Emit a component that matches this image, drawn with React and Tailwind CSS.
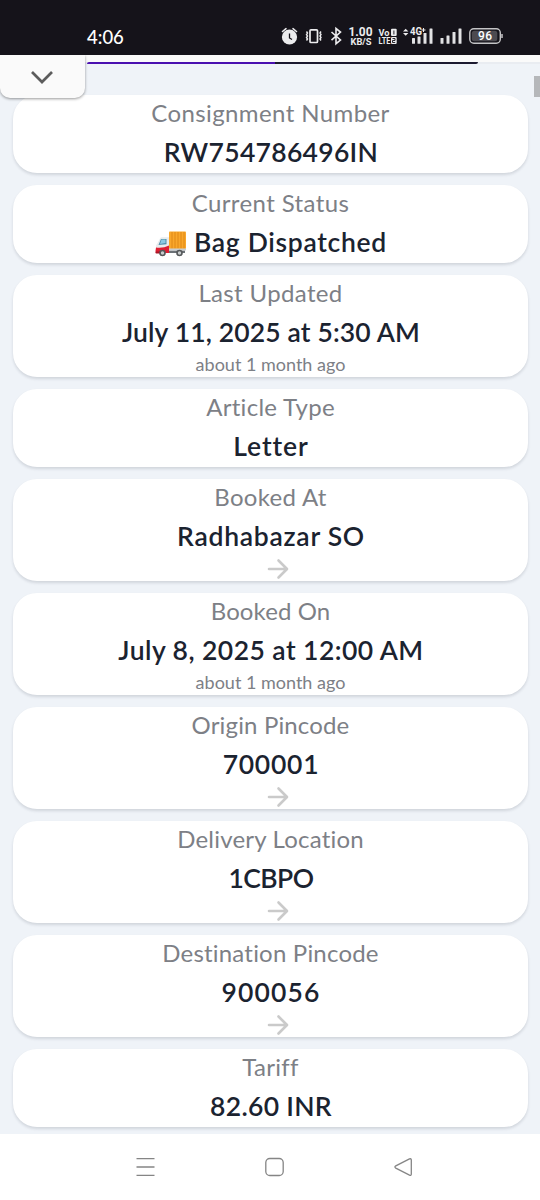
import React from "react";

const cards = [
  { label: "Consignment Number", labelClass: "tracking-[0.4px]", value: "RW754786496IN", valueClass: "tracking-[0.3px]" },
  { label: "Current Status", labelClass: "tracking-[0.4px]", value: "Bag Dispatched", valueClass: "tracking-[0.7px]", truck: true },
  { label: "Last Updated", labelClass: "tracking-[0.35px]", value: "July 11, 2025 at 5:30 AM", valueClass: "tracking-[0.15px]", ago: "about 1 month ago" },
  { label: "Article Type", labelClass: "tracking-[0.3px]", value: "Letter", valueClass: "tracking-[0.9px]" },
  { label: "Booked At", labelClass: "tracking-[0.3px]", value: "Radhabazar SO", valueClass: "tracking-[0.73px]", arrow: true },
  { label: "Booked On", labelClass: "tracking-[0.1px]", value: "July 8, 2025 at 12:00 AM", valueClass: "tracking-[0.45px]", ago: "about 1 month ago" },
  { label: "Origin Pincode", labelClass: "tracking-[0.15px]", value: "700001", valueClass: "tracking-[0.75px]", arrow: true },
  { label: "Delivery Location", labelClass: "tracking-[0.2px]", value: "1CBPO", valueClass: "tracking-[-0.6px]", arrow: true },
  { label: "Destination Pincode", labelClass: "tracking-[0.2px]", value: "900056", valueClass: "tracking-[1.1px]", arrow: true },
  { label: "Tariff", labelClass: "tracking-[0.3px]", value: "82.60 INR", valueClass: "tracking-[0.3px]" },
];

const Truck = () => (
  <svg width="32" height="28" viewBox="0 0 32 28" className="mt-[7px] mr-[7px] shrink-0">
    <rect x="3" y="20.500" width="27" height="2.500" fill="#6b7176" />
    <rect x="14" y="1.500" width="17" height="17.500" rx="0.800" fill="#f9a72b" />
    <path d="M17 2v16.500M20 2v16.500M23 2v16.500M26 2v16.500M29 2v16.500" stroke="#d98212" strokeWidth="0.800" />
    <rect x="14" y="18.500" width="17" height="2" fill="#c9cdd0" />
    <path d="M5 8.500Q5.500 7.300 7 7.300H14V20H1V16Q1 15 2 14Z" fill="#e8ecee" />
    <path d="M6 9h5.500v5.200L3.500 15Z" fill="#4e8ea8" />
    <path d="M6.500 9.600h4v3.500L5 14Z" fill="#8cc9e2" />
    <path d="M1 17.500Q8 18.500 14 15.500V23H1.500Q0.500 23 0.500 21Z" fill="#df1e32" />
    <rect x="0.500" y="21.500" width="5" height="2" rx="0.800" fill="#a91627" />
    <circle cx="7.500" cy="23" r="3.300" fill="#55585a" />
    <circle cx="7.500" cy="23" r="1.700" fill="#c8cccd" />
    <circle cx="24.500" cy="23" r="3.300" fill="#55585a" />
    <circle cx="24.500" cy="23" r="1.700" fill="#c8cccd" />
  </svg>
);

const Arrow = () => (
  <svg
    width="22"
    height="22"
    viewBox="0 0 22 22"
    fill="none"
    stroke="#cacaca"
    strokeWidth="2.6"
    strokeLinecap="round"
    strokeLinejoin="round"
    className="ml-[14px]"
  >
    <path d="M2 11H19.500M11.500 2.500L20 11L11.500 19.500" />
  </svg>
);

const Card = ({ item }) => (
  <div className="w-[515px] rounded-[24px] bg-white flex flex-col items-center shadow-[0_2px_3px_rgba(30,35,60,0.14)] whitespace-nowrap">
    <div className={`h-[38px] leading-[36px] text-[24px] text-[#7d8086] ${item.labelClass}`}>
      {item.label}
    </div>
    <div className="h-[40px] pl-px flex items-start">
      {item.truck && <Truck />}
      <span className={`leading-[38px] text-[26.5px] font-semibold text-[#1b2330] ${item.valueClass}`}>
        {item.value}
      </span>
    </div>
    {item.ago && (
      <div className="h-[24px] leading-[22px] text-[18px] text-[#7d8086]">
        {item.ago}
      </div>
    )}
    {item.arrow && (
      <div className="h-[24px] flex items-center">
        <Arrow />
      </div>
    )}
  </div>
);

const StatusBar = () => (
  <div className="h-[55px] bg-[#15131a] flex items-start text-white">
    <div className="ml-[87px] mt-[25px] w-[194px] text-[18.5px] leading-[24px] font-medium">4:06</div>
    <svg width="230" height="30" viewBox="281 22 230 30" className="mt-[22px]" fill="none">
      {/* alarm */}
      <circle cx="289.500" cy="37" r="7.600" fill="#ececee" />
      <path d="M282.500 31.500L286 28.700M296.500 31.500L293 28.700" stroke="#ececee" strokeWidth="1.600" strokeLinecap="round" />
      <path d="M289.500 33.500V38L292 39.500" stroke="#15131a" strokeWidth="1.300" />
      {/* vibrate */}
      <rect x="310" y="29.800" width="7.500" height="12.700" rx="1" stroke="#ececee" strokeWidth="1.700" />
      <path d="M306.500 31.500l1 1.500l-1 1.500l1 1.500l-1 1.500l1 1.500l-1 1.500M321 31.500l-1 1.500l1 1.500l-1 1.500l1 1.500l-1 1.500l1 1.500" stroke="#ececee" strokeWidth="1.400" />
      {/* bluetooth */}
      <path d="M331.500 32L340.500 40L336 43.700V28.500L340.500 32L331.500 40.200" stroke="#ececee" strokeWidth="1.600" />
      <g fill="#ececee" fontFamily="Roboto, sans-serif" fontWeight="700">
        <text x="348.500" y="36" fontSize="12" textLength="24" lengthAdjust="spacingAndGlyphs">1.00</text>
        <text x="350.500" y="45" fontSize="9" textLength="21" lengthAdjust="spacingAndGlyphs">KB/S</text>
        <text x="378.500" y="35.500" fontSize="9" textLength="11" lengthAdjust="spacingAndGlyphs">Vo</text>
        <text x="378.500" y="44" fontSize="9" textLength="12" lengthAdjust="spacingAndGlyphs">LTE</text>
        <text x="410" y="35" fontSize="10.500" textLength="12" lengthAdjust="spacingAndGlyphs">4G</text>
      </g>
      <rect x="391" y="28.800" width="5.700" height="7.200" rx="1" fill="#ececee" />
      <rect x="391" y="37" width="5.700" height="7" rx="1" fill="#ececee" />
      <path d="M393.900 30.500v4M392.500 38.500h2.500v2h-2.500v2h2.700" stroke="#15131a" strokeWidth="0.900" />
      <path d="M403 31.500l2.700-2.700l2.700 2.700zM403 33l2.700 2.700l2.700-2.700z" fill="#ececee" />
      <path d="M423.500 28v4M421.500 30h4" stroke="#ececee" strokeWidth="1.100" />
      <g fill="#e2e2e4">
        <rect x="412" y="38" width="3" height="5.700" rx="0.500" />
        <rect x="417.500" y="36.500" width="3" height="7.200" rx="0.500" />
        <rect x="423.500" y="33" width="3" height="10.700" rx="0.500" />
        <rect x="429.500" y="28.500" width="3" height="15.200" rx="0.500" />
        <rect x="440.500" y="38" width="3" height="5.700" rx="0.500" />
        <rect x="446.500" y="35.500" width="3" height="8.200" rx="0.500" />
        <rect x="452.500" y="32" width="3" height="11.700" rx="0.500" />
        <rect x="458.500" y="28.500" width="3" height="15.200" rx="0.500" />
      </g>
      {/* battery */}
      <rect x="469.800" y="28.800" width="30.500" height="14.500" rx="4" stroke="#c4c4c6" strokeWidth="1.400" />
      <rect x="471.800" y="30.800" width="25.500" height="10.500" rx="2.500" fill="#4c4a50" />
      <path d="M502 34v4" stroke="#c4c4c6" strokeWidth="1.500" />
      <text x="478" y="40.300" fontSize="12" fontWeight="500" fill="#fff" fontFamily="Roboto, sans-serif" textLength="14">96</text>
    </svg>
  </div>
);

const NavBar = () => (
  <div className="h-[66px] bg-white flex items-center shrink-0">
    <svg width="540" height="66" viewBox="0 1134 540 66" fill="none" stroke="#858585" strokeWidth="1.300">
      <path d="M136.500 1158.700H154.500M136.500 1167H154.500M136.500 1175.300H154.500" />
      <rect x="265.800" y="1158.500" width="17.400" height="17" rx="4" />
      <path d="M409.500 1158.900L395.800 1165.900Q394 1167 395.800 1168.100L409.500 1175.200Q411.300 1175.800 411.300 1174V1160Q411.300 1158.300 409.500 1158.900Z" />
    </svg>
  </div>
);

const App = () => {
  return (
    <div className="relative w-[540px] h-[1200px] overflow-hidden bg-[#eff3f8] font-['Lato',sans-serif] flex flex-col">
      <StatusBar />
      <div className="h-[7px] bg-[#fafafa]" />
      {/* page load progress */}
      <div className="h-[2px] bg-[#e9ecf1]">
        <div className="h-full ml-[87px] w-[391px] flex">
          <div className="w-[188px] bg-[#4a10b0] rounded-tl-[2px]" />
          <div className="flex-1 bg-[#1c1a30] rounded-br-[2px]" />
        </div>
      </div>
      <div className="flex-1 pt-[31px] pl-[13px] flex flex-col gap-[12px]">
        {cards.map((item) => (
          <Card key={item.label} item={item} />
        ))}
      </div>
      <NavBar />

      {/* pull-down handle over the list */}
      <div className="absolute left-0 top-[55px] w-[85px] h-[43px] bg-[#fafafa] rounded-b-[10px] shadow-[0_1px_3px_rgba(0,0,0,0.4)] [clip-path:inset(0_-6px_-6px_0)] flex justify-center">
        <svg width="24" height="14" viewBox="0 0 24 14" className="mt-[15px] -ml-px" fill="none" stroke="#5c5c5c" strokeWidth="2.700">
          <path d="M2 2L12 12L22 2" />
        </svg>
      </div>
      {/* scrollbar thumb */}
      <div className="absolute right-0 top-[76px] w-[6px] h-[21px] bg-[#b5b7ba]" />
    </div>
  );
};

export default App;
